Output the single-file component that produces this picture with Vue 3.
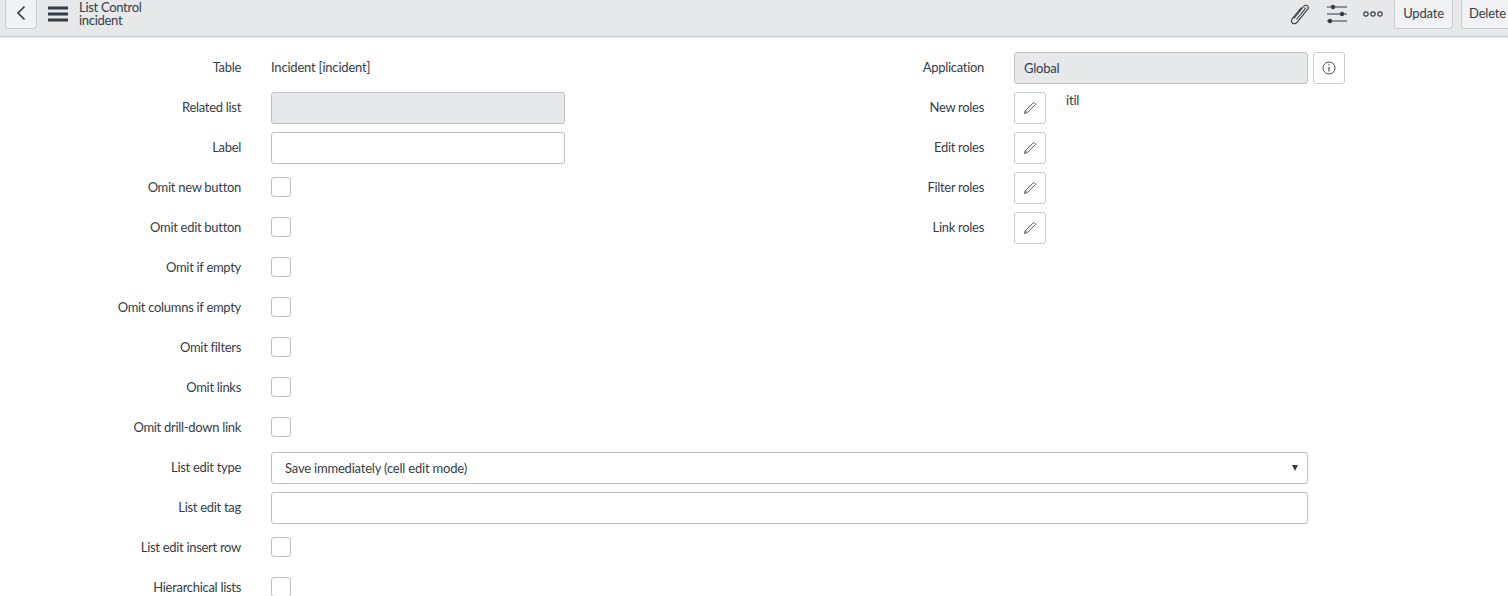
<script setup>
const leftRows = [
  { label: 'Table', type: 'text', value: 'Incident [incident]' },
  { label: 'Related list', type: 'readonly' },
  { label: 'Label', type: 'input' },
  { label: 'Omit new button', type: 'check' },
  { label: 'Omit edit button', type: 'check' },
  { label: 'Omit if empty', type: 'check' },
  { label: 'Omit columns if empty', type: 'check' },
  { label: 'Omit filters', type: 'check' },
  { label: 'Omit links', type: 'check' },
  { label: 'Omit drill-down link', type: 'check' },
]
const roleRows = [
  { label: 'New roles', value: 'itil' },
  { label: 'Edit roles' },
  { label: 'Filter roles' },
  { label: 'Link roles' },
]
</script>

<template>
  <div class="page">
    <header class="topbar">
      <button class="btn back" aria-label="Back">
        <svg width="12" height="16" viewBox="0 0 12 16"><path d="M9.500 1.500 3 8l6.500 6.500" fill="none" stroke="#343d47" stroke-width="1.700" /></svg>
      </button>
      <svg class="menu" width="20" height="16" viewBox="0 0 20 16"><path d="M0 2h20M0 8h20M0 14h20" stroke="#343d47" stroke-width="3" /></svg>
      <div class="title">
        <div>List Control</div>
        <div>incident</div>
      </div>
      <div class="actions">
        <svg class="clip" width="22" height="22" viewBox="0 0 22 22" fill="none" stroke="#343d47" stroke-width="1.100">
          <path d="M6 15.500 15.500 3.500c1.200-1.500 3-1.600 4-.7 1 .9 1 2.500-.1 3.900L9.500 18.800c-1.700 2-3.700 2.300-5 1.200-1.300-1.100-1.300-3 .2-4.900L13.500 4.500" />
          <path d="M8.500 16.500 16.800 6.300c.6-.8.500-1.500 0-1.900" />
        </svg>
        <svg class="sliders" width="20" height="22" viewBox="0 0 20 22" fill="#343d47">
          <path d="M0 4h20M0 11h20M0 18h20" stroke="#343d47" stroke-width="1.200" />
          <circle cx="6" cy="4" r="2.200" /><circle cx="15" cy="11" r="2.200" /><circle cx="3" cy="18" r="2.200" />
        </svg>
        <svg class="more" width="20" height="6" viewBox="0 0 20 6" fill="none" stroke="#343d47" stroke-width="1.200">
          <circle cx="3" cy="3" r="2.200" /><circle cx="10" cy="3" r="2.200" /><circle cx="17" cy="3" r="2.200" />
        </svg>
        <button class="btn update">Update</button>
        <button class="btn delete">Delete</button>
      </div>
    </header>

    <main class="form">
      <div class="columns">
        <div class="col-left">
          <div class="row" v-for="r in leftRows" :key="r.label">
            <label class="lbl">{{ r.label }}</label>
            <span v-if="r.type === 'text'" class="static">{{ r.value }}</span>
            <div v-else-if="r.type === 'readonly'" class="field small disabled"></div>
            <div v-else-if="r.type === 'input'" class="field small"></div>
            <div v-else class="check"></div>
          </div>
        </div>
        <div class="col-right">
          <div class="row">
            <label class="lbl right">Application</label>
            <div class="field small disabled value">Global</div>
            <button class="icon-btn info" aria-label="Info">
              <svg width="14" height="14" viewBox="0 0 14 14" fill="none" stroke="#343d47">
                <circle cx="7" cy="7" r="6" stroke-width="0.900" />
                <path d="M7 6v4.500" stroke-width="1.100" /><path d="M7 3.300v1.300" stroke-width="1.100" />
              </svg>
            </button>
          </div>
          <div class="row" v-for="r in roleRows" :key="r.label">
            <label class="lbl right">{{ r.label }}</label>
            <button class="icon-btn" aria-label="Edit">
              <svg width="14" height="14" viewBox="0 0 14 14" fill="none" stroke="#4f5761" stroke-width="1">
                <path d="M1.500 12.500 2.300 9.800 10.800 1.300l1.900 1.900-8.500 8.500z" />
                <path d="M2.300 9.800l1.900 1.900" />
              </svg>
            </button>
            <span v-if="r.value" class="role">{{ r.value }}</span>
          </div>
        </div>
      </div>

      <div class="row">
        <label class="lbl">List edit type</label>
        <div class="field wide value select">
          <span>Save immediately (cell edit mode)</span>
          <span class="caret"></span>
        </div>
      </div>
      <div class="row">
        <label class="lbl">List edit tag</label>
        <div class="field wide"></div>
      </div>
      <div class="row">
        <label class="lbl">List edit insert row</label>
        <div class="check"></div>
      </div>
      <div class="row">
        <label class="lbl">Hierarchical lists</label>
        <div class="check"></div>
      </div>
    </main>
  </div>
</template>

<style>
html, body {
  margin: 0;
  height: 596px;
  overflow: hidden;
  background: #fff;
}
</style>

<style scoped>
.page {
  height: 596px;
  overflow: hidden;
  font-family: "Lato", "Noto Sans", sans-serif;
  font-size: 13px;
  letter-spacing: -0.2px;
  color: #343d47;
}
.topbar {
  height: 36px;
  display: flex;
  align-items: flex-start;
  background: #e6e8ea;
  border-bottom: 1px solid #c4c7ca;
  box-shadow: 0 1px 1px rgba(0, 0, 0, 0.06);
  padding-left: 5px;
  overflow: hidden;
}
.btn {
  height: 32px;
  margin-top: -3px;
  box-sizing: border-box;
  border: 1px solid #c9ccd0;
  border-radius: 3px;
  background: #f1f2f3;
  color: #343d47;
  font: inherit;
  letter-spacing: inherit;
  padding: 0;
}
.back {
  width: 32px;
  display: flex;
  align-items: center;
  justify-content: center;
}
.menu {
  margin: 6px 0 0 11px;
}
.title {
  margin: 0 0 0 11px;
  padding-top: 1px;
  line-height: 13px;
  letter-spacing: -0.300px;
}
.actions {
  margin-left: auto;
  display: flex;
  align-items: flex-start;
}
.clip {
  margin: 3px 17px 0 0;
}
.sliders {
  margin: 3px 16px 0 0;
}
.more {
  margin: 11px 11px 0 0;
}
.update {
  width: 59px;
  margin-right: 8px;
}
.delete {
  width: 60px;
  margin-right: -13px;
  padding-right: 7px;
}
.form {
  padding-top: 10px;
}
.columns {
  display: flex;
}
.col-left {
  width: 743px;
}
.row {
  height: 40px;
  display: flex;
  align-items: center;
}
.lbl {
  width: 241px;
  margin-right: 30px;
  text-align: right;
  flex-shrink: 0;
  letter-spacing: -0.300px;
}
.field {
  height: 32px;
  margin-top: 2px;
  box-sizing: border-box;
  border: 1px solid #bdc0c4;
  border-radius: 3px;
  background: #fff;
  display: flex;
  align-items: center;
}
.small {
  width: 294px;
}
.wide {
  width: 1037px;
}
.disabled {
  background: #e6e8ea;
}
.value {
  padding-left: 9px;
}
.select {
  padding: 0 9px 0 13px;
  justify-content: space-between;
}
.caret {
  width: 0;
  height: 0;
  border-left: 3px solid transparent;
  border-right: 3px solid transparent;
  border-top: 6px solid #343d47;
}
.check {
  width: 20px;
  height: 20px;
  box-sizing: border-box;
  border: 1px solid #bdc0c4;
  border-radius: 3px;
  background: #fff;
}
.icon-btn {
  width: 32px;
  height: 32px;
  margin-top: 2px;
  box-sizing: border-box;
  border: 1px solid #c9ccd0;
  border-radius: 3px;
  background: #fff;
  padding: 0;
  display: flex;
  align-items: center;
  justify-content: center;
}
.info {
  margin-left: 5px;
}
.role {
  align-self: flex-start;
  margin: 5px 0 0 20px;
  line-height: 16px;
}
</style>
